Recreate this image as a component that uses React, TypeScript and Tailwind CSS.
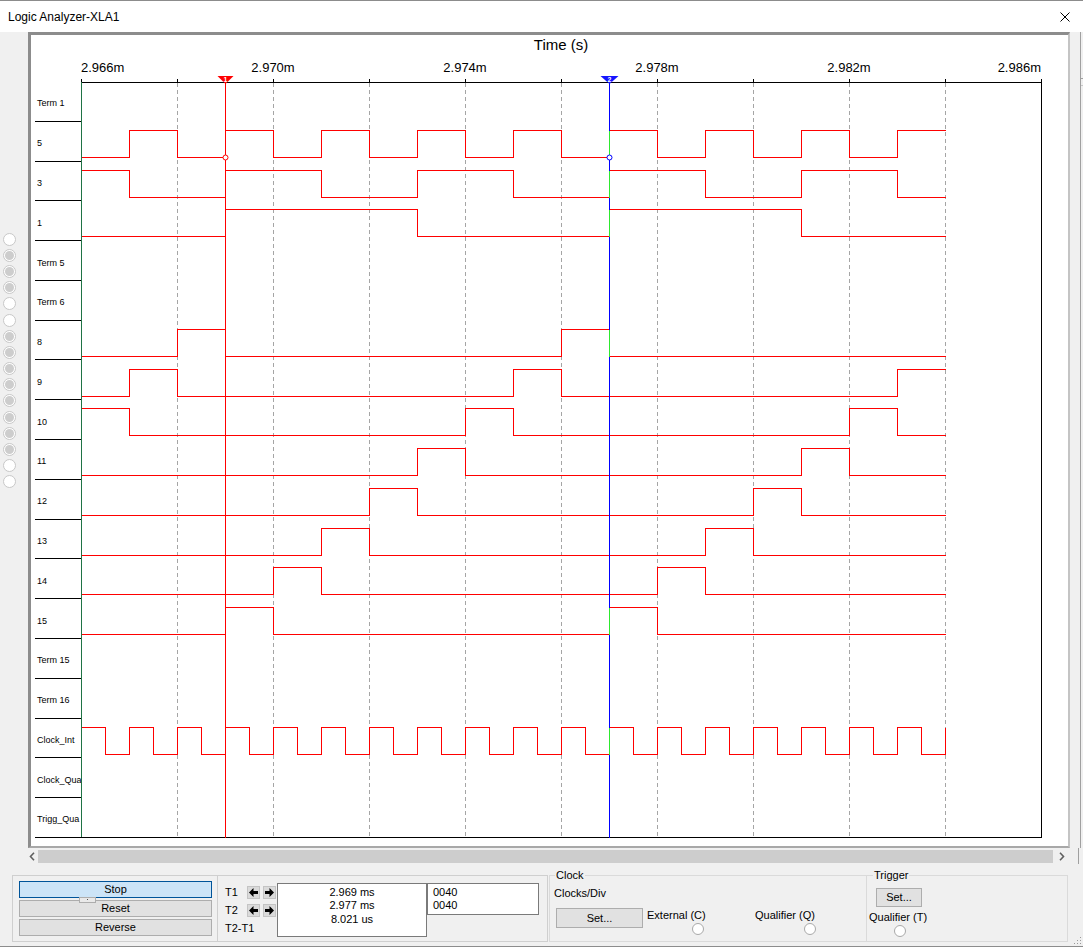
import React from "react"

// chart geometry (page pixels)
const ROW_H = 756 / 19
const X0 = 81 // left edge of the wave area
const Y0 = 35 // top of the svg
const END = 945 // last sample
const T1 = 225
const T2 = 609

const LABELS = [
  "Term 1", "5", "3", "1", "Term 5", "Term 6", "8", "9", "10", "11", "12",
  "13", "14", "15", "Term 15", "Term 16", "Clock_Int", "Clock_Qua", "Trigg_Qua",
]

// which terminal pins are connected
const PINS = [false, true, true, true, false, false, true, true, true, true, true, true, true, true, false, false]

type Wave = { row: number; high: boolean; edges: number[] }

const CLOCK_EDGES = Array.from({ length: 36 }, (_, k) => 105 + 24 * k)

const WAVES: Wave[] = [
  { row: 1, high: false, edges: [129, 177, 225, 273, 321, 369, 417, 465, 513, 561, 609, 657, 705, 753, 801, 849, 897] },
  { row: 2, high: true, edges: [129, 225, 321, 417, 513, 609, 705, 801, 897] },
  { row: 3, high: false, edges: [225, 417, 609, 801] },
  { row: 6, high: false, edges: [177, 225, 561, 609] },
  { row: 7, high: false, edges: [129, 177, 513, 561, 897] },
  { row: 8, high: true, edges: [129, 465, 513, 849, 897] },
  { row: 9, high: false, edges: [417, 465, 801, 849] },
  { row: 10, high: false, edges: [369, 417, 753, 801] },
  { row: 11, high: false, edges: [321, 369, 705, 753] },
  { row: 12, high: false, edges: [273, 321, 657, 705] },
  { row: 13, high: false, edges: [225, 273, 609, 657] },
  { row: 16, high: true, edges: CLOCK_EDGES },
]

const TICKS = [
  { x: 0, label: "2.966m", anchor: "start" },
  { x: 192, label: "2.970m", anchor: "middle" },
  { x: 384, label: "2.974m", anchor: "middle" },
  { x: 576, label: "2.978m", anchor: "middle" },
  { x: 768, label: "2.982m", anchor: "middle" },
  { x: 960, label: "2.986m", anchor: "end" },
] as const

const DIVS = Array.from({ length: 11 }, (_, k) => 81 + 96 * k)

function sx(x: number) {
  return x - X0 + 0.5
}

function levels(row: number) {
  const top = 82 + ROW_H * row - Y0
  return { hi: Math.round(top + 8) + 0.5, lo: Math.round(top + 35) + 0.5 }
}

function wavePath(w: Wave) {
  const { hi, lo } = levels(w.row)
  let level = w.high
  let d = `M1 ${level ? hi : lo}`
  for (const e of w.edges) {
    level = !level
    d += ` H${sx(e)} V${level ? hi : lo}`
  }
  if (w.edges[w.edges.length - 1] < END) d += ` H${sx(END)}`
  return d
}

function Chart() {
  return (
    <svg width={987} height={811} className="block shrink-0">
      <text x={480} y={15} textAnchor="middle" fontSize={15}>
        Time (s)
      </text>
      {TICKS.map((t) => (
        <text key={t.label} x={t.x} y={37} textAnchor={t.anchor} fontSize={13}>
          {t.label}
        </text>
      ))}

      <g shapeRendering="crispEdges">
        {DIVS.slice(1, 10).map((x) => (
          <line key={x} x1={sx(x)} y1={48} x2={sx(x)} y2={803} stroke="#a5a5a5" strokeDasharray="4 3" />
        ))}
        <line x1={0} y1={47.5} x2={961} y2={47.5} stroke="#000" />
        {DIVS.map((x) => (
          <line key={x} x1={sx(x)} y1={44} x2={sx(x)} y2={47} stroke="#000" />
        ))}
        <line x1={0.5} y1={47} x2={0.5} y2={803} stroke="#1f7345" />
        <line x1={960.5} y1={47} x2={960.5} y2={803} stroke="#000" />
        <line x1={0} y1={802.5} x2={961} y2={802.5} stroke="#000" />

        {WAVES.map((w) => (
          <path key={w.row} d={wavePath(w)} fill="none" stroke="#ff0000" />
        ))}

        {/* cursors */}
        <line x1={sx(T1)} y1={47} x2={sx(T1)} y2={803} stroke="#ff0000" />
        <line x1={sx(T2)} y1={47} x2={sx(T2)} y2={803} stroke="#0000ff" />
        {WAVES.filter((w) => w.edges.includes(T2)).map((w) => {
          const { hi, lo } = levels(w.row)
          return <line key={w.row} x1={sx(T2)} y1={hi} x2={sx(T2)} y2={lo} stroke="#2ee82e" />
        })}
      </g>

      <polygon points="136.5,41 152.5,41 144.5,49" fill="#ff0000" />
      <text x={144.5} y={46.5} textAnchor="middle" fontSize={7} fontWeight="bold" fill="#fff">
        1
      </text>
      <polygon points="519.5,41 537.5,41 528.5,49" fill="#1515ff" />
      <text x={528.5} y={47} textAnchor="middle" fontSize={7} fontWeight="bold" fill="#fff">
        2
      </text>
      <circle cx={144.5} cy={122.5} r={2.5} fill="#fff" stroke="#ff0000" />
      <circle cx={528.5} cy={122.5} r={2.5} fill="#fff" stroke="#0000ff" />
    </svg>
  )
}

function Pin({ on }: { on: boolean }) {
  return (
    <div className="h-[16.2px] flex items-center">
      <div className="w-[13px] h-[13px] rounded-full border border-[#c8c8c8] bg-white flex items-center justify-center">
        {on && <div className="w-[9px] h-[9px] rounded-full bg-[#cdcdcd]" />}
      </div>
    </div>
  )
}

function Arrow({ dir }: { dir: "left" | "right" }) {
  return (
    <div className="w-[13px] h-[13px] bg-[#dadada] border border-[#c4c4c4] flex items-center justify-center">
      <svg width="9" height="9" viewBox="0 0 9 9">
        {dir === "left" ? (
          <polygon points="0,4.5 4.5,0 4.5,3 9,3 9,6 4.5,6 4.5,9" fill="#000" />
        ) : (
          <polygon points="9,4.5 4.5,0 4.5,3 0,3 0,6 4.5,6 4.5,9" fill="#000" />
        )}
      </svg>
    </div>
  )
}

function Radio() {
  return <div className="w-[12px] h-[12px] rounded-full border border-[#a9a9a9] bg-white" />
}

export default function App() {
  return (
    <div className="w-[1083px] h-[947px] overflow-hidden bg-[#f0f0f0] border-t border-b border-[#8c8c8c] flex flex-col font-['Liberation_Sans',Arial,sans-serif] text-[11px] text-black">
      {/* Title bar */}
      <div className="h-[31px] shrink-0 bg-white flex items-center justify-between pl-[8px] pr-[13px]">
        <span className="text-[12px]">Logic Analyzer-XLA1</span>
        <svg width="10" height="10" viewBox="0 0 10 10">
          <path d="M0.5 0.5 L9.5 9.5 M9.5 0.5 L0.5 9.5" stroke="#000" strokeWidth="1" />
        </svg>
      </div>

      {/* Pins + plot */}
      <div className="h-[816px] shrink-0 flex">
        <div className="w-[28px] shrink-0 pt-[199px] pl-[3px] flex flex-col">
          {PINS.map((on, i) => (
            <Pin key={i} on={on} />
          ))}
        </div>

        <div className="w-[1042px] h-full shrink-0 border-l-[3px] border-t-[3px] border-r-2 border-b-2 border-l-[#8c8c8c] border-t-[#8c8c8c] border-r-[#c4c4c4] border-b-[#a8a8a8] bg-white flex pl-[4px]">
          <div className="w-[46px] shrink-0 pt-[47px]">
            {LABELS.map((l) => (
              <div key={l} className="h-[39.79px] border-b border-black flex items-center pl-[2px] pt-[5px] text-[9px] leading-none whitespace-nowrap">
                {l}
              </div>
            ))}
          </div>
          <Chart />
        </div>

        <div className="w-[13px] h-full flex justify-end">
          <div className="w-[3px] h-full border-l border-[#a0a0a0] flex flex-col pt-[46px] gap-[6px]">
            <div className="h-px bg-[#a0a0a0]" />
            <div className="h-px bg-[#c8c8c8]" />
          </div>
        </div>
      </div>

      {/* Horizontal scrollbar */}
      <div className="h-[16px] shrink-0 flex items-center pl-[26px]">
        <div className="w-[12px] flex justify-center">
          <svg width="6" height="9" viewBox="0 0 6 9">
            <polyline points="5,0.8 1.5,4.5 5,8.2" fill="none" stroke="#606060" strokeWidth="1.6" />
          </svg>
        </div>
        <div className="w-[1015px] h-[13px] bg-[#cdcdcd]" />
        <div className="w-[17px] flex justify-center">
          <svg width="6" height="9" viewBox="0 0 6 9">
            <polyline points="1,0.8 4.5,4.5 1,8.2" fill="none" stroke="#606060" strokeWidth="1.6" />
          </svg>
        </div>
        <div className="w-[11px] h-full flex justify-end">
          <div className="w-[3px] h-full border-l border-[#a0a0a0]" />
        </div>
      </div>

      {/* Controls */}
      <div className="h-[82px] shrink-0 flex pt-[11px]">
        {/* Run / cursor group */}
        <div className="relative ml-[12px] w-[536px] h-[67px] border border-[#cfcfcf] flex">
          <div className="w-[204px] shrink-0 pl-[6px] pt-[5px] flex flex-col gap-[2px]">
            <button className="w-[193px] h-[17px] bg-[#cce4f7] border border-[#005499] leading-none">Stop</button>
            <button className="w-[193px] h-[17px] bg-[#e1e1e1] border border-[#adadad] leading-none">Reset</button>
            <button className="w-[193px] h-[17px] bg-[#e1e1e1] border border-[#adadad] leading-none">Reverse</button>
          </div>
          <div className="absolute left-[66px] top-[21px] w-[17px] h-[6px] border border-[#adadad] bg-[#e9e9e9] flex justify-center">
            <div className="w-px h-px mt-[1px] bg-[#555]" />
          </div>

          <div className="flex-1 border-l border-[#cfcfcf] flex pt-[7px] pl-[7px]">
            <div className="w-[22px] flex flex-col">
              <div className="h-[18px] flex items-center">T1</div>
              <div className="h-[18px] flex items-center">T2</div>
              <div className="h-[18px] flex items-center whitespace-nowrap">T2-T1</div>
            </div>
            <div className="w-[30px] flex flex-col">
              <div className="h-[18px] flex items-center gap-[3px]">
                <Arrow dir="left" />
                <Arrow dir="right" />
              </div>
              <div className="h-[18px] flex items-center gap-[3px]">
                <Arrow dir="left" />
                <Arrow dir="right" />
              </div>
            </div>
            <div className="w-[150px] h-[54px] border border-[#7a7a7a] bg-white flex flex-col items-center pt-[2px] leading-[13.3px]">
              <span>2.969 ms</span>
              <span>2.977 ms</span>
              <span>8.021 us</span>
            </div>
            <div className="w-[112px] h-[32px] border border-[#7a7a7a] bg-white flex flex-col pl-[5px] pt-[2px] leading-[13px]">
              <span>0040</span>
              <span>0040</span>
            </div>
          </div>
        </div>

        {/* Clock group */}
        <div className="relative ml-[1px] w-[317px] h-[67px] border border-r-0 border-[#dadada] flex flex-col pl-[4px]">
          <span className="absolute -top-[8px] left-[5px] px-px bg-[#f0f0f0] leading-[14px]">Clock</span>
          <div className="mt-[10px] h-[14px] leading-[14px]">Clocks/Div</div>
          <div className="mt-[8px] flex items-start">
            <button className="ml-[2px] w-[87px] h-[20px] bg-[#e1e1e1] border border-[#adadad] leading-none">Set...</button>
            <div className="ml-[4px] w-[108px] flex flex-col">
              <span className="h-[14px] leading-[14px]">External (C)</span>
              <div className="ml-[45px] mt-[1px]">
                <Radio />
              </div>
            </div>
            <div className="flex flex-col">
              <span className="h-[14px] leading-[14px]">Qualifier (Q)</span>
              <div className="ml-[49px] mt-[1px]">
                <Radio />
              </div>
            </div>
          </div>
        </div>

        {/* Trigger group */}
        <div className="relative w-[202px] h-[67px] border border-[#dadada] flex flex-col">
          <span className="absolute -top-[8px] left-[6px] px-px bg-[#f0f0f0] leading-[14px]">Trigger</span>
          <button className="ml-[9px] mt-[12px] w-[46px] h-[19px] bg-[#e1e1e1] border border-[#adadad] leading-none">Set...</button>
          <span className="ml-[2px] mt-[3px] h-[14px] leading-[14px]">Qualifier (T)</span>
          <div className="ml-[27px] mt-[1px]">
            <Radio />
          </div>
        </div>

        <div className="ml-[6px] self-end mb-[1px]">
          <svg width="8" height="8" viewBox="0 0 8 8">
            <rect x="6" y="0" width="1" height="1" fill="#999" />
            <rect x="3" y="3" width="1" height="1" fill="#999" />
            <rect x="6" y="3" width="1" height="1" fill="#999" />
            <rect x="0" y="6" width="1" height="1" fill="#999" />
            <rect x="3" y="6" width="1" height="1" fill="#999" />
            <rect x="6" y="6" width="1" height="1" fill="#999" />
          </svg>
        </div>
      </div>
    </div>
  )
}
